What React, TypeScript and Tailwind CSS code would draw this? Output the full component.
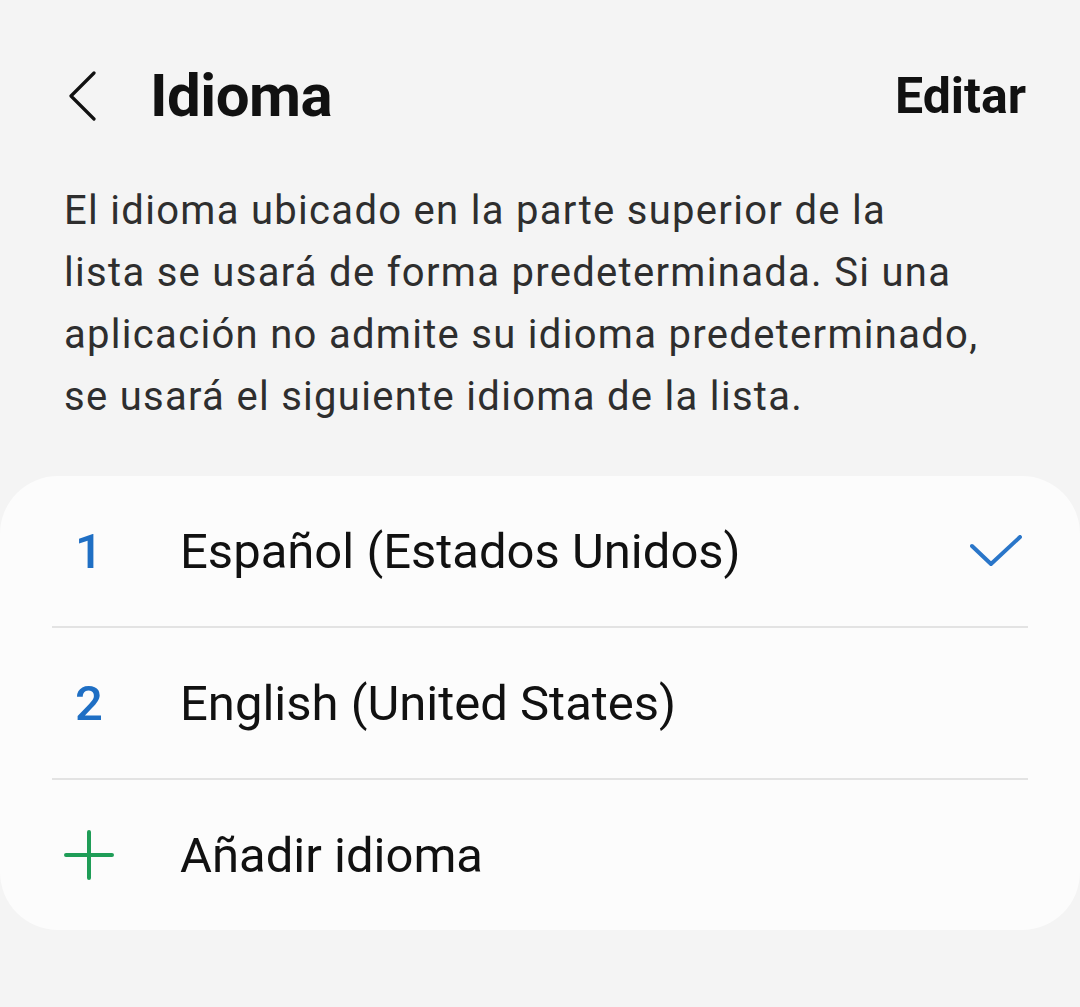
const font = "font-['Roboto','Liberation_Sans',sans-serif]";

type Row = { lead: React.ReactNode; label: string; checked?: boolean };

const Num = ({ n }: { n: number }) => (
  <span className="text-[49px] leading-none font-medium text-[#1f6fc4]">{n}</span>
);

const Plus = () => (
  <svg width="50" height="50" viewBox="0 0 50 50" fill="none" stroke="#1f9d57" strokeWidth="4" strokeLinecap="round">
    <path d="M25 2v46M2 25h46" />
  </svg>
);

const Check = () => (
  <svg width="52" height="32" viewBox="0 0 52 32" fill="none" stroke="#2a76c9" strokeWidth="4" strokeLinecap="round" strokeLinejoin="round">
    <path d="M2 11l19 18 29-27" />
  </svg>
);

const rows: Row[] = [
  { lead: <Num n={1} />, label: "Español (Estados Unidos)", checked: true },
  { lead: <Num n={2} />, label: "English (United States)" },
  { lead: <Plus />, label: "Añadir idioma" },
];

export default function App() {
  return (
    <div className={`${font} w-[1080px] h-[1007px] bg-[#f4f4f4] overflow-hidden`}>
      <header className="flex items-center h-[100px] mt-[46px] pl-[68px] pr-[54px]">
        <svg width="30" height="50" viewBox="0 0 30 50" fill="none" stroke="#111" strokeWidth="3.2" strokeLinecap="round" strokeLinejoin="round">
          <path d="M26 2L3 25l23 23" />
        </svg>
        <h1 className="ml-[52px] text-[60px] leading-none font-bold text-[#111] tracking-[-0.5px]">Idioma</h1>
        <button className="ml-auto text-[50px] leading-none font-bold text-[#111]">Editar</button>
      </header>

      <p className="mt-[34px] pl-[64px] text-[40px] leading-[62px] tracking-[1.3px] text-[#2e2e2e] whitespace-nowrap">
        El idioma ubicado en la parte superior de la
        <br />
        lista se usará de forma predeterminada. Si una
        <br />
        aplicación no admite su idioma predeterminado,
        <br />
        se usará el siguiente idioma de la lista.
      </p>

      <section className="mt-[48px] bg-[#fcfcfc] rounded-[58px] px-[52px]">
        {rows.map((r, i) => (
          <div key={r.label} className={i > 0 ? "border-t-2 border-[#e3e3e3]" : ""}>
            <div className="flex items-center h-[150px]">
              <div className="w-[74px] flex justify-center">{r.lead}</div>
              <span className="ml-[54px] text-[49px] leading-none text-[#111]">{r.label}</span>
              {r.checked && (
                <div className="ml-auto mr-[6px]">
                  <Check />
                </div>
              )}
            </div>
          </div>
        ))}
      </section>
    </div>
  );
}
